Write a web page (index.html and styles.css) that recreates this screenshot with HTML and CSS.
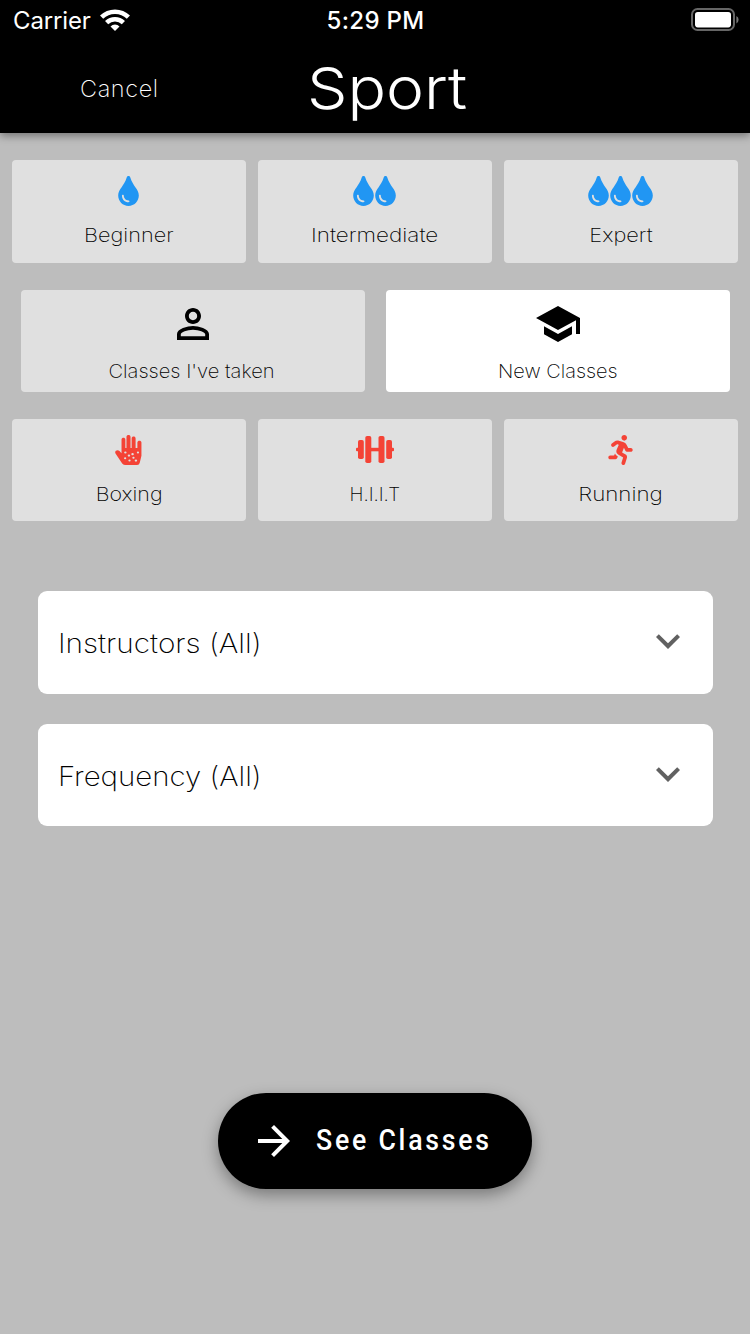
FILE: index.html
```html
<!DOCTYPE html>
<html lang="en">
<head>
<meta charset="utf-8">
<title>Sport</title>
<link rel="stylesheet" href="styles.css">
</head>
<body>
<svg class="defs" aria-hidden="true">
  <symbol id="drop" viewBox="0 0 352 512"><path d="M205.22 22.09c-7.94-28.78-49.44-30.12-58.44 0C100.01 179.85 0 222.72 0 333.91 0 432.35 78.72 512 176 512s176-79.65 176-178.09c0-111.75-99.79-153.34-146.78-311.82zM176 448c-61.75 0-112-50.25-112-112 0-8.84 7.16-16 16-16s16 7.16 16 16c0 44.11 35.89 80 80 80 8.84 0 16 7.16 16 16s-7.16 16-16 16z"/></symbol>
  <symbol id="chevron" viewBox="0 0 24 24"><path d="M16.59 8.59L12 13.17 7.41 8.59 6 10l6 6 6-6z"/></symbol>
</svg>
<header class="header">
  <div class="status">
    <div class="carrier"><span>Carrier</span>
      <svg class="wifi" viewBox="0 0 30 22"><g fill="none" stroke="#fff" stroke-width="4.5"><path d="M1.6 8.2a19 19 0 0 1 26.8 0"/><path d="M6.6 13.6a11.9 11.9 0 0 1 16.8 0"/></g><path fill="#fff" d="M15 22l-4.5-4.6a6.4 6.4 0 0 1 9 0z"/></svg>
    </div>
    <div class="time">5:29 PM</div>
    <svg class="battery" viewBox="0 0 48 24"><rect x="1" y="1" width="42" height="21" rx="5.5" fill="none" stroke="#666" stroke-width="2"/><rect x="4" y="4" width="36" height="15.4" rx="2.8" fill="#fff"/><path d="M45.4 8v7.4q2.2-1.2 2.2-3.7T45.4 8z" fill="#777"/></svg>
  </div>
  <div class="nav"><span class="cancel">Cancel</span><h1 class="title">Sport</h1></div>
</header>
<main class="main">
  <section class="row">
    <div class="card"><div class="icons blue"><svg class="drop"><use href="#drop"/></svg></div><span class="label t-beginner">Beginner</span></div>
    <div class="card"><div class="icons blue"><svg class="drop"><use href="#drop"/></svg><svg class="drop"><use href="#drop"/></svg></div><span class="label t-intermediate">Intermediate</span></div>
    <div class="card"><div class="icons blue"><svg class="drop"><use href="#drop"/></svg><svg class="drop"><use href="#drop"/></svg><svg class="drop"><use href="#drop"/></svg></div><span class="label t-expert">Expert</span></div>
  </section>
  <section class="row pair">
    <div class="card big"><div class="icons"><svg class="icon48" viewBox="0 0 24 24"><path d="M12 5.9c1.16 0 2.1.94 2.1 2.1s-.94 2.1-2.1 2.1S9.9 9.16 9.9 8s.94-2.1 2.1-2.1m0 9c2.97 0 6.1 1.46 6.1 2.1v1.1H5.9V17c0-.64 3.13-2.1 6.1-2.1M12 4C9.79 4 8 5.79 8 8s1.79 4 4 4 4-1.79 4-4-1.79-4-4-4zm0 9c-2.67 0-8 1.34-8 4v3h16v-3c0-2.66-5.33-4-8-4z"/></svg></div><span class="label t-taken">Classes I've taken</span></div>
    <div class="card big selected"><div class="icons"><svg class="icon48" viewBox="0 0 24 24"><path d="M5 13.18v4L12 21l7-3.82v-4L12 17l-7-3.82zM12 3L1 9l11 6 9-4.91V17h2V9L12 3z"/></svg></div><span class="label t-new">New Classes</span></div>
  </section>
  <section class="row">
    <div class="card"><div class="icons red"><svg class="hand" viewBox="0.4 0 24 30" preserveAspectRatio="none"><path d="M6.2 4.6c0-2.6 3.4-2.6 3.4 0V13h1V1.9c0-2.5 3.6-2.5 3.6 0V13h1V3.4c0-2.5 3.5-2.5 3.5 0V13h1.6V7.5c0-2.4 3.6-2.4 3.6 0v13.2l-1.5 7.1Q22 30 20 30H9.8q-1.8 0-3-1.6L1 18.7c-1.6-2.5 1.5-4.7 3.4-2.7l1.8 2.2z"/><g fill="#e0e0e0"><circle cx="9.6" cy="17.5" r="1.1"/><circle cx="16" cy="19.2" r="1.1"/><circle cx="20.8" cy="17.6" r="1"/><circle cx="12.8" cy="20.6" r="1.1"/><circle cx="9.4" cy="23.2" r="1"/><circle cx="16.8" cy="22.8" r="1"/><circle cx="13.3" cy="25.6" r="1"/><circle cx="19" cy="25.6" r="1.1"/></g></svg></div><span class="label t-boxing">Boxing</span></div>
    <div class="card"><div class="icons red"><svg class="bell" viewBox="0 0 38 27"><rect x="0" y="11.8" width="3" height="3.4" rx="1"/><rect x="35" y="11.8" width="3" height="3.4" rx="1"/><rect x="2" y="4" width="5.8" height="19" rx="1.8"/><rect x="30.2" y="4" width="5.8" height="19" rx="1.8"/><rect x="9.3" y="0" width="6" height="27" rx="1.8"/><rect x="22.5" y="0" width="6" height="27" rx="1.8"/><rect x="14" y="11.8" width="10" height="3.5"/></svg></div><span class="label t-hiit">H.I.I.T</span></div>
    <div class="card"><div class="icons red"><svg class="run" viewBox="0 0 416 512"><path d="M272 96c26.51 0 48-21.49 48-48S298.51 0 272 0s-48 21.49-48 48 21.49 48 48 48zM113.69 317.47l-14.8 34.52H32c-17.67 0-32 14.33-32 32s14.33 32 32 32h77.45c19.25 0 36.58-11.44 44.11-29.09l8.79-20.52-10.67-6.3c-17.32-10.23-30.06-25.37-37.99-42.82zM384 223.99h-44.03l-26.06-53.25c-12.5-25.55-35.45-44.23-61.78-50.94l-71.08-21.14c-28.3-6.8-57.77-.55-80.84 17.14l-39.67 30.41c-14.03 10.75-16.69 30.83-5.92 44.86s30.84 16.66 44.86 5.92l39.69-30.41c7.67-5.89 17.44-8 25.27-6.14l14.7 4.37-37.46 87.39c-12.62 29.48-1.31 64.01 26.3 80.31l84.98 50.17-27.47 87.73c-5.28 16.86 4.11 34.82 20.97 40.09 3.19 1 6.41 1.48 9.58 1.48 13.61 0 26.23-8.77 30.52-22.45l31.64-101.06c5.91-20.77-2.89-43.08-21.64-54.39l-61.24-36.14 31.31-78.28 20.27 41.43c8 16.34 24.92 26.89 43.11 26.89H384c17.67 0 32-14.33 32-32s-14.33-31.99-32-31.99z"/></svg></div><span class="label t-running">Running</span></div>
  </section>
  <section class="filters">
    <div class="select"><span class="t-instructors">Instructors (All)</span><svg class="icon48 chev"><use href="#chevron"/></svg></div>
    <div class="select"><span class="t-frequency">Frequency (All)</span><svg class="icon48 chev"><use href="#chevron"/></svg></div>
  </section>
  <button class="fab"><svg class="icon48" viewBox="0 0 24 24"><path d="M12 4l-1.41 1.41L16.17 11H4v2h12.17l-5.58 5.59L12 20l8-8z"/></svg><span class="fab-label">See Classes</span></button>
</main>
</body>
</html>
```
FILE: styles.css
```css
* { box-sizing: border-box; }
body { margin: 0; width: 750px; height: 1334px; overflow: hidden; background: #bdbdbd; color: #000; font-family: Inter, "Liberation Sans", sans-serif; font-weight: 300; }
svg { display: block; fill: currentColor; flex: none; }
.defs { position: absolute; width: 0; height: 0; }
.header { position: relative; height: 133.4px; background: #000; color: #fff; box-shadow: 0 3px 8px rgba(0,0,0,.38); }
.status { display: grid; grid-template-columns: 1fr auto 1fr; align-items: center; height: 40px; padding: 0 11px 0 13px; font-size: 24px; }
.carrier { display: flex; align-items: center; gap: 9px; font-weight: 400; letter-spacing: -.15px; }
.wifi { width: 30px; height: 22px; }
.time { margin-left: -1px; font-weight: 500; letter-spacing: .3px; }
.battery { width: 48px; height: 24px; justify-self: end; }
.nav { display: grid; grid-template-columns: 306.5px 1fr; align-items: center; height: 93px; padding-top: 3px; }
.cancel { padding-left: 80px; font-size: 23.5px; font-weight: 250; letter-spacing: .6px; }
.title { justify-self: start; margin: 0; font-size: 58px; font-weight: 300; line-height: 90px; transform: scaleX(1.105); transform-origin: left; }
.main { display: flex; flex-direction: column; padding-top: 26.8px; }
.row { display: grid; grid-template-columns: repeat(3, 1fr); gap: 12px; padding: 0 12px; margin-bottom: 26.6px; }
.pair { grid-template-columns: repeat(2, 1fr); gap: 21px; padding: 0 20.5px; margin: .4px 0 26.6px; }
.card { display: flex; flex-direction: column; align-items: center; height: 102.5px; padding-top: 12px; background: #e0e0e0; border-radius: 4px; }
.selected { background: #fff; }
.icons { display: flex; align-items: center; justify-content: center; height: 38px; gap: 1px; }
.big { padding-top: 10.5px; }
.big .icons { height: 48px; }
.blue { color: #2196f3; padding-right: 2px; }
.red { color: #f44336; padding-right: 1px; }
.drop { width: 21px; height: 30px; }
.hand { width: 27px; height: 30px; }
.bell { width: 38px; height: 27px; }
.run { width: 25px; height: 30px; }
.icon48 { width: 48px; height: 48px; }
.label { margin-top: 12px; font-size: 19.3px; font-weight: 250; line-height: 26px; white-space: nowrap; }
.big .label { margin-top: 10px; }
.t-beginner { transform: scaleX(1.125); }
.t-intermediate { transform: scaleX(1.165); }
.t-expert { transform: scaleX(1.13); }
.t-taken { transform: translateX(-1px) scaleX(1.045); }
.t-new { transform: scaleX(1.035); }
.t-boxing { transform: scaleX(1.11); }
.t-hiit { transform: scaleX(.98); }
.t-running { transform: scaleX(1.16); }
.t-instructors { transform: scaleX(1.103); transform-origin: left; font-weight: 250; }
.t-frequency { transform: scaleX(1.09); transform-origin: left; font-weight: 250; }
.filters { display: flex; flex-direction: column; gap: 30px; margin-top: 43.4px; padding: 0 37.5px; }
.select { display: flex; align-items: center; justify-content: space-between; height: 102.3px; padding: 3px 20.5px 0 20px; border-radius: 9px; background: #fff; font-size: 27px; }
.chev { color: #616161; margin-top: -5px; }
.fab { display: flex; align-items: center; align-self: center; gap: 18px; width: 314px; height: 96px; margin-top: 266.8px; padding: 0 0 0 32px; border: 0; border-radius: 48px; background: #000; color: #fff; box-shadow: 0 6px 16px rgba(0,0,0,.36); font: 500 29px Roboto, sans-serif; letter-spacing: 3px; white-space: nowrap; }
.fab-label { margin-top: -1px; transform: scaleX(.92); transform-origin: left; }
```
